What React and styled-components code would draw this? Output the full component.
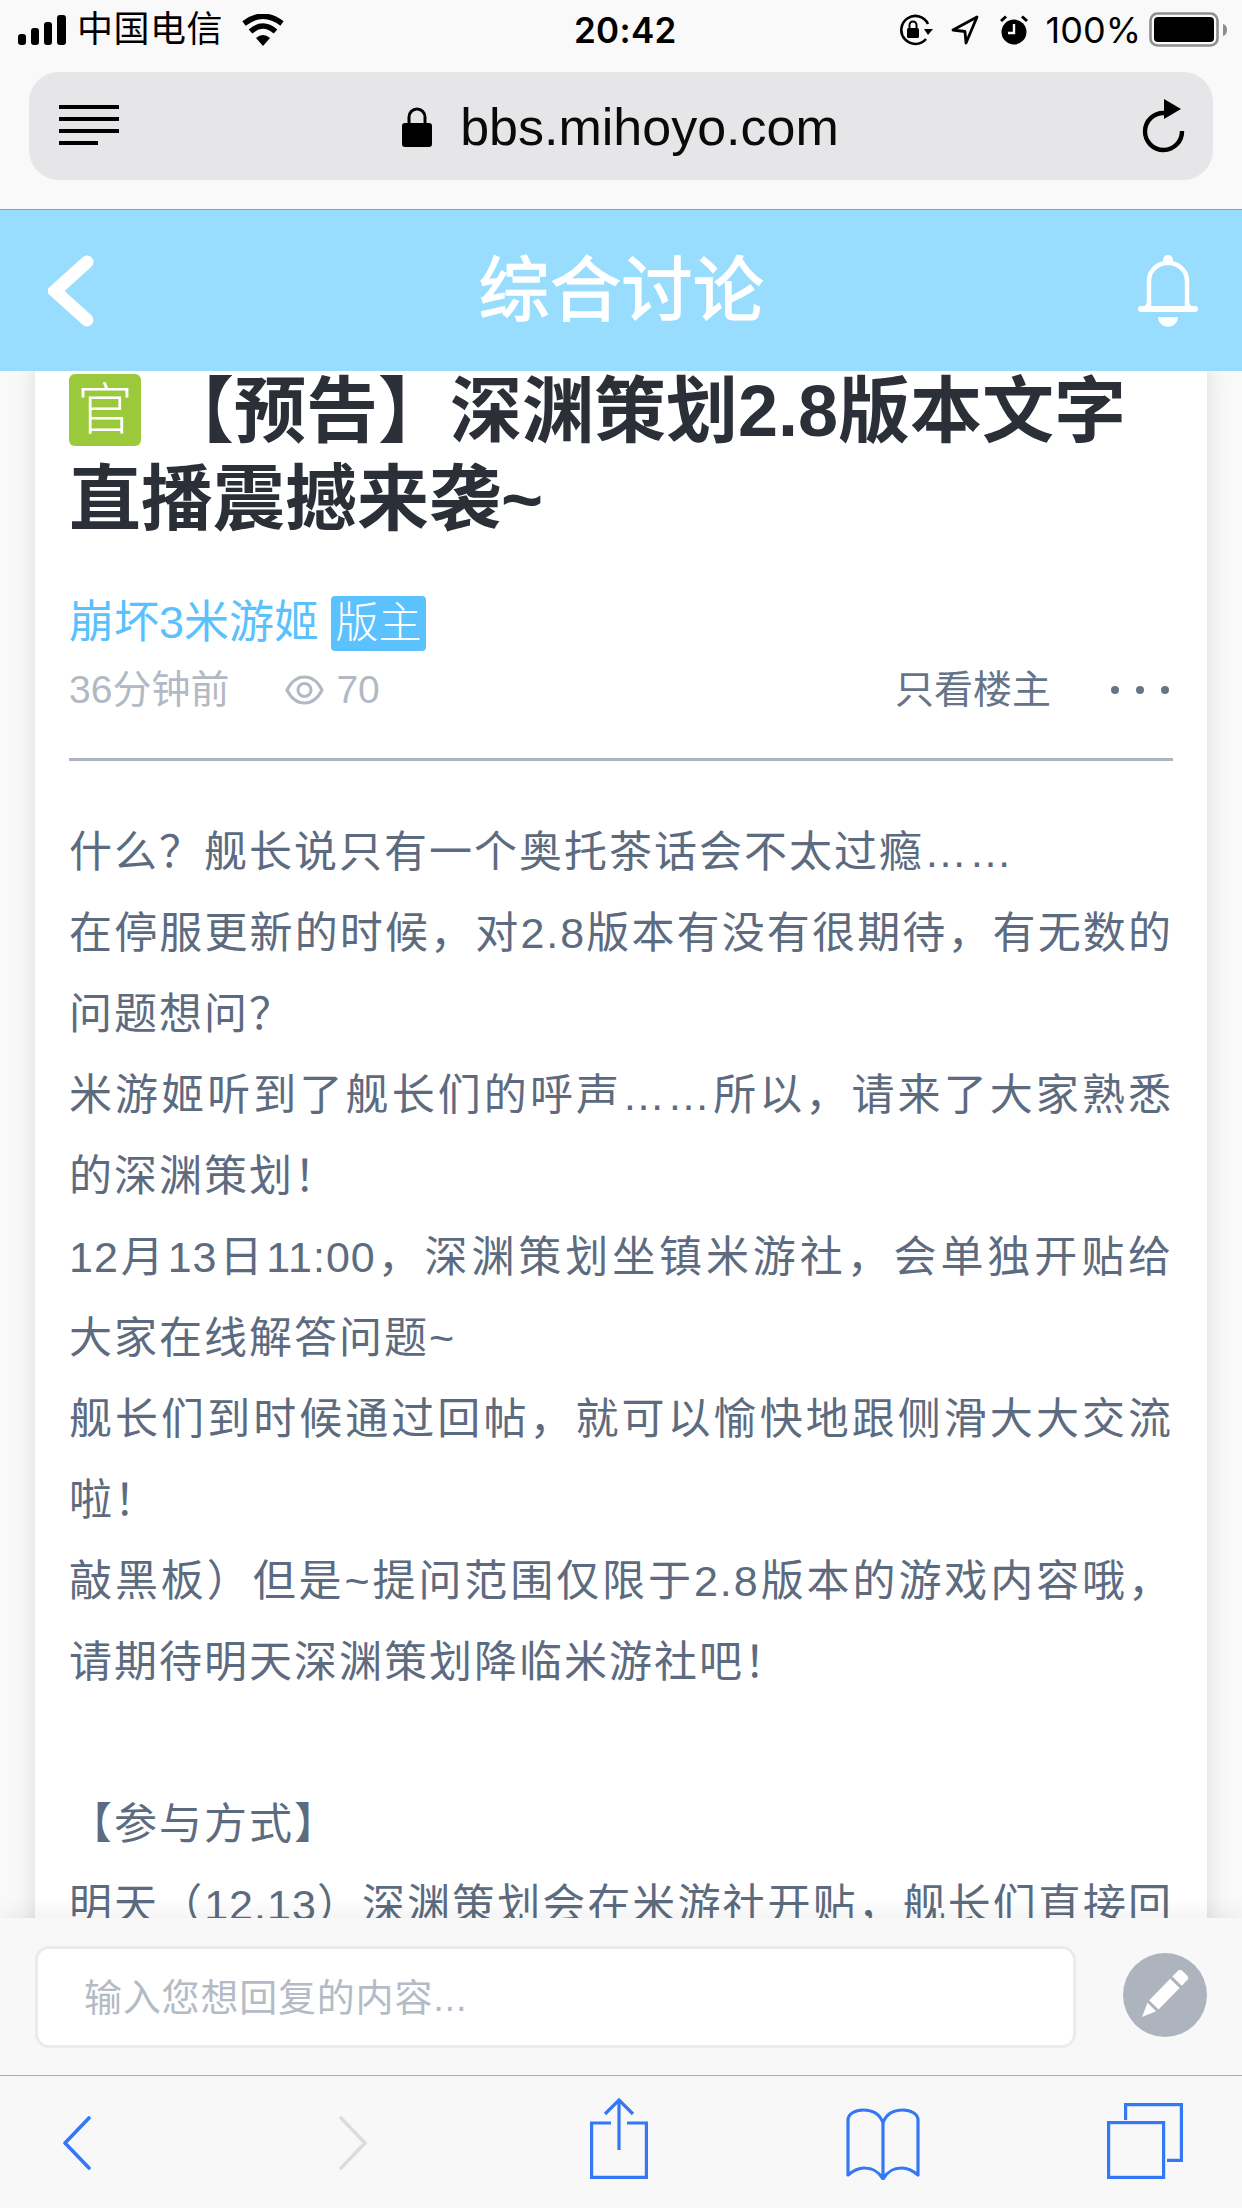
import React from 'react';
import styled, { createGlobalStyle } from 'styled-components';

const Global = createGlobalStyle`
  html, body { margin: 0; padding: 0; background: #f9f9f9; }
  * { box-sizing: border-box; }
  body { font-family: "Liberation Sans", "Noto Sans CJK SC", sans-serif; }
`;

const Phone = styled.div`
  width: 1242px; height: 2208px; display: flex; flex-direction: column; overflow: hidden; background: #f9f9f9;
`;
const StatusBar = styled.div`
  height: 60px; flex: none; display: flex; align-items: center; padding: 0 15px 0 18px; color: #000;
`;
const StatusLeft = styled.div`
  width: 556px; display: flex; align-items: center;
`;
const Carrier = styled.span`
  font-size: 36px; line-height: 40px; margin: 0 19px 0 11px; letter-spacing: 0.5px;
`;
const Time = styled.span`
  font-family: Inter, "Liberation Sans", sans-serif; font-size: 35px; font-weight: 600; letter-spacing: 0.3px; line-height: 40px;
`;
const StatusRight = styled.div`
  margin-left: auto; display: flex; align-items: center;
`;
const Percent = styled.span`
  font-family: Inter, "Liberation Sans", sans-serif; font-size: 36px; line-height: 40px; margin: 0 8px 0 18px;
`;
const AddressWrap = styled.div`
  height: 150px; flex: none; padding: 12px 29px 0; border-bottom: 1px solid #6fa9cd;
`;
const AddressBar = styled.div`
  height: 108px; border-radius: 30px; background: #e6e6e8; display: flex; align-items: center; padding: 0 27px 0 30px;
`;
const Url = styled.div`
  flex: 1; display: flex; align-items: center; justify-content: center; gap: 28px; padding-right: 18px;
  font-size: 52px; color: #0a0a0a; line-height: 60px;
`;
const UrlText = styled.span`
  margin-top: 2px;
`;
const Header = styled.header`
  height: 161px; flex: none; background: #98ddfd; display: flex; align-items: center; padding: 0 44px 0 48px; justify-content: space-between;
`;
const HeaderTitle = styled.h2`
  margin: 0 0 0 11px; font-size: 71px; font-weight: 400; color: #fff; line-height: 90px; text-align: center; -webkit-text-stroke: 1.4px #fff; letter-spacing: 0.5px;
`;
const Main = styled.main`
  flex: 1; min-height: 0; overflow: hidden; padding: 0 35px;
`;
const Card = styled.article`
  background: #fff; box-shadow: 0 0 22px rgba(0,0,0,.13); padding: 0 34px; min-height: 100%;
`;
const Title = styled.h1`
  margin: -4px 0 0; font-size: 72px; line-height: 88px; font-weight: 700; color: #2b3038;
`;
const Official = styled.span`
  display: inline-block; width: 72px; height: 72px; border-radius: 6px; background: #9aca3c; color: #fff;
  font-size: 56px; font-weight: 300; line-height: 72px; text-align: center; vertical-align: top; margin: 7px 21px 0 0;
`;
const AuthorRow = styled.div`
  display: flex; align-items: center; margin-top: 52px; height: 56px;
`;
const Author = styled.span`
  font-size: 45px; color: #5bc1fd; line-height: 56px;
`;
const RoleTag = styled.span`
  margin-left: 12px; width: 95px; height: 55px; border-radius: 4px; background: #5bc2ff; color: #fff; font-size: 43px; font-weight: 300;
  line-height: 55px; text-align: center;
`;
const MetaRow = styled.div`
  display: flex; align-items: center; margin-top: 16px; height: 46px; font-size: 39px; line-height: 46px; color: #b3b9c4;
`;
const Views = styled.span`
  display: flex; align-items: center; gap: 12px; margin-left: 56px;
`;
const OnlyOwner = styled.span`
  margin-left: auto; color: #66748a;
`;
const Dots = styled.span`
  display: flex; gap: 17px; margin: 0 4px 0 60px;
`;
const Dot = styled.i`
  display: block; width: 8px; height: 8px; border-radius: 50%; background: #66748a;
`;
const Rule = styled.div`
  height: 3px; background: #adb5bf; margin-top: 45px;
`;
const Body = styled.div`
  margin-top: 51px; font-size: 43px; letter-spacing: 2px; line-height: 81px; color: #5d6b80;
`;
const Para = styled.p`
  margin: 0; min-height: 81px; text-align: justify;
`;
const Tight = styled.span`
  letter-spacing: ${p => p.$gap}px;
`;
const ReplyBar = styled.div`
  height: 157px; flex: none; background: #f8f8f9; display: flex; align-items: center; padding: 0 35px; gap: 47px;
  box-shadow: 0 -6px 18px rgba(0,0,0,.06); position: relative;
`;
const ReplyInput = styled.div`
  width: 1041px; height: 102px; margin-top: 1px; border: 3px solid #e9ebef; border-radius: 14px; background: #fff; display: flex; align-items: center;
  padding: 0 0 6px 46px; font-size: 38px; letter-spacing: 0.8px; color: #b4bbc6;
`;
const PenButton = styled.button`
  width: 84px; height: 84px; border: 0; padding: 0; border-radius: 50%; background: #adb4bd; display: block; margin-top: -3px;
`;
const Toolbar = styled.nav`
  height: 133px; flex: none; background: #f8f8f8; border-top: 1px solid #b0b0b0; display: grid;
  grid-template-columns: 276px 251px 256px 261px auto; align-items: start; padding: 22px 0 0 63px;
`;
const Svg = styled.svg`
  display: block; flex: none;
`;
const NavIcon = styled(Svg)`
  margin-top: 18px;
`;
const BookIcon = styled(Svg)`
  margin-top: 10px;
`;
const TabsIcon = styled(Svg)`
  margin-top: 5px;
`;
const LocationIcon = styled(Svg)`
  margin-left: 18px;
`;
const AlarmIcon = styled(Svg)`
  margin-left: 21px;
`;

const Signal = () => (
  <Svg width="48" height="30" viewBox="0 0 48 30" fill="#000">
    <rect x="0" y="19" width="8" height="11" rx="3" />
    <rect x="13" y="13" width="8" height="17" rx="3" />
    <rect x="26" y="7" width="8" height="23" rx="3" />
    <rect x="39" y="0" width="9" height="30" rx="3" />
  </Svg>
);
const Wifi = () => (
  <Svg width="42" height="32" viewBox="0 0 42 32">
    <path d="M21 32 L14 24 Q21 18 28 24 Z" fill="#000" />
    <path d="M8.5 17.5 Q21 6.5 33.5 17.5" fill="none" stroke="#000" strokeWidth="5.5" />
    <path d="M2 9.5 Q21 -5 40 9.5" fill="none" stroke="#000" strokeWidth="5.5" />
  </Svg>
);
const RotationLock = () => (
  <Svg width="36" height="32" viewBox="0 0 36 32">
    <path d="M31 10 A14 14 0 1 0 29 25" fill="none" stroke="#000" strokeWidth="2.6" />
    <path d="M27 15 L36 15 L31 21 Z" fill="#000" />
    <rect x="10" y="14" width="12" height="10" rx="1.5" fill="#000" />
    <path d="M12.5 14 V11 A3.5 3.5 0 0 1 19.5 11 V14" fill="none" stroke="#000" strokeWidth="2" />
  </Svg>
);
const Location = () => (
  <LocationIcon width="28" height="30" viewBox="0 0 28 30">
    <path d="M26 2 L2 15 L14 16.5 L15 28 Z" fill="none" stroke="#000" strokeWidth="2.8" strokeLinejoin="round" />
  </LocationIcon>
);
const Alarm = () => (
  <AlarmIcon width="28" height="30" viewBox="0 0 28 30">
    <circle cx="14" cy="17" r="12.5" fill="#000" />
    <path d="M1 6 L6 1.5 M27 6 L22 1.5" stroke="#000" strokeWidth="3" />
    <path d="M14 9 V18 H8" fill="none" stroke="#f9f9f9" strokeWidth="2.4" />
  </AlarmIcon>
);
const Battery = () => (
  <Svg width="78" height="36" viewBox="0 0 78 36">
    <rect x="1.5" y="1.5" width="67" height="32" rx="7" fill="none" stroke="#8e8e8e" strokeWidth="2.6" />
    <rect x="5" y="5" width="60" height="25" rx="4" fill="#000" />
    <path d="M74 12 Q78 13 78 18 Q78 23 74 24 Z" fill="#8e8e8e" />
  </Svg>
);
const Menu = () => (
  <Svg width="60" height="42" viewBox="0 0 60 42" fill="#000">
    <rect y="0" width="60" height="4" /><rect y="12" width="60" height="4" />
    <rect y="24" width="60" height="4" /><rect y="36" width="39" height="4" />
  </Svg>
);
const Lock = () => (
  <Svg width="30" height="42" viewBox="0 0 30 42">
    <path d="M7 20 V12 A8 8 0 0 1 23 12 V20" fill="none" stroke="#000" strokeWidth="3" />
    <rect x="0" y="18" width="30" height="24" rx="3" fill="#000" />
  </Svg>
);
const Reload = () => (
  <Svg width="46" height="54" viewBox="0 0 46 54">
    <path d="M24 14 A18.5 18.5 0 1 0 42 32" fill="none" stroke="#000" strokeWidth="4.4" />
    <path d="M24 0 L41 10 L24 20 Z" fill="#000" />
  </Svg>
);
const BackChevron = () => (
  <Svg width="46" height="72" viewBox="0 0 46 72">
    <path d="M39 7 L7 36 L39 65" fill="none" stroke="#fff" strokeWidth="13" strokeLinecap="round" strokeLinejoin="miter" />
  </Svg>
);
const Bell = () => (
  <Svg width="60" height="72" viewBox="0 0 60 72" fill="none">
    <circle cx="30" cy="5" r="5" fill="#fff" />
    <path d="M11 53 V26 C11 15 20 8 30 8 C40 8 49 15 49 26 V53" stroke="#fff" strokeWidth="4.5" />
    <path d="M11 48 Q10 53 3 55" stroke="#fff" strokeWidth="4.5" />
    <path d="M49 48 Q50 53 57 55" stroke="#fff" strokeWidth="4.5" />
    <rect x="0" y="51" width="60" height="6" rx="3" fill="#fff" />
    <path d="M20 62 H40 A10 10 0 0 1 20 62 Z" fill="#fff" />
  </Svg>
);
const Eye = () => (
  <Svg width="39" height="30" viewBox="0 0 39 30" fill="none" stroke="#b3b9c4" strokeWidth="3">
    <path d="M2 15 C7 5 13 2 19.5 2 C26 2 32 5 37 15 C32 25 26 28 19.5 28 C13 28 7 25 2 15 Z" />
    <circle cx="19.5" cy="15" r="6.5" />
  </Svg>
);
const Pencil = () => (
  <Svg width="84" height="84" viewBox="0 0 84 84" fill="#fff">
    <path d="M19 64 L24.5 49.8 L33.1 58.2 Z" />
    <path d="M26.2 47.2 L47.2 25.7 L56.6 34.9 L35.5 56.4 Z" />
    <path d="M49.3 23.6 L55.3 17.4 Q57 16 59 17.6 L64.5 23 Q66 25 64.7 26.5 L58.7 32.7 Z" />
  </Svg>
);
const NavBack = ({ color }) => (
  <NavIcon width="28" height="54" viewBox="0 0 28 54">
    <path d="M26 2 L2 27 L26 52" fill="none" stroke={color} strokeWidth="3.6" strokeLinecap="round" strokeLinejoin="round" />
  </NavIcon>
);
const NavForward = ({ color }) => (
  <NavIcon width="28" height="54" viewBox="0 0 28 54">
    <path d="M2 2 L26 27 L2 52" fill="none" stroke={color} strokeWidth="3.6" strokeLinecap="round" strokeLinejoin="round" />
  </NavIcon>
);
const Share = () => (
  <Svg width="58" height="82" viewBox="0 0 58 82" fill="none" stroke="#3478f6" strokeWidth="3.2">
    <path d="M21 25 H1.6 V79.4 H56.4 V25 H37" />
    <path d="M29 2 V52" />
    <path d="M15 16 L29 2 L43 16" />
  </Svg>
);
const Book = () => (
  <BookIcon width="74" height="72" viewBox="0 0 74 72" fill="none" stroke="#3478f6" strokeWidth="3.2" strokeLinejoin="round">
    <path d="M37 15 C34 6 26 2 17 2 C9 2 2 6 2 12 V67 C8 62 13 60 18 60 C28 60 33 64 37 71 C41 64 46 60 56 60 C61 60 66 62 72 67 V12 C72 6 65 2 57 2 C48 2 40 6 37 15 V71" />
  </BookIcon>
);
const Tabs = () => (
  <TabsIcon width="76" height="76" viewBox="0 0 76 76" fill="none" stroke="#3478f6" strokeWidth="3.2">
    <path d="M18.6 17 V1.6 H74.4 V57.4 H60" />
    <rect x="1.6" y="19.6" width="55" height="54.8" />
  </TabsIcon>
);

const paragraphs = [
  '什么？舰长说只有一个奥托茶话会不太过瘾……',
  '在停服更新的时候，对2.8版本有没有很期待，有无数的问题想问？',
  '米游姬听到了舰长们的呼声……所以，请来了大家熟悉的深渊策划！',
  <><Tight $gap={1}>12</Tight>月<Tight $gap={1}>13</Tight>日<Tight $gap={1}>11:00</Tight>，深渊策划坐镇米游社，会单独开贴给大家在线解答问题~</>,
  '舰长们到时候通过回帖，就可以愉快地跟侧滑大大交流啦！',
  '敲黑板）但是~提问范围仅限于2.8版本的游戏内容哦，请期待明天深渊策划降临米游社吧！',
  '',
  '【参与方式】',
  <>明天（<Tight $gap={1}>12.13</Tight>）深渊策划会在米游社开贴，舰长们直接回复帖子提问即可。</>,
];

export default function App() {
  return (
    <Phone>
      <Global />
      <StatusBar>
        <StatusLeft>
          <Signal />
          <Carrier>中国电信</Carrier>
          <Wifi />
        </StatusLeft>
        <Time>20:42</Time>
        <StatusRight>
          <RotationLock />
          <Location />
          <Alarm />
          <Percent>100%</Percent>
          <Battery />
        </StatusRight>
      </StatusBar>
      <AddressWrap>
        <AddressBar>
          <Menu />
          <Url><Lock /><UrlText>bbs.mihoyo.com</UrlText></Url>
          <Reload />
        </AddressBar>
      </AddressWrap>
      <Header>
        <BackChevron />
        <HeaderTitle>综合讨论</HeaderTitle>
        <Bell />
      </Header>
      <Main>
        <Card>
          <Title>
            <Official>官</Official>【预告】深渊策划2.8版本文字直播震撼来袭~
          </Title>
          <AuthorRow>
            <Author>崩坏3米游姬</Author>
            <RoleTag>版主</RoleTag>
          </AuthorRow>
          <MetaRow>
            <span>36分钟前</span>
            <Views><Eye />70</Views>
            <OnlyOwner>只看楼主</OnlyOwner>
            <Dots><Dot /><Dot /><Dot /></Dots>
          </MetaRow>
          <Rule />
          <Body>
            {paragraphs.map((p, i) => <Para key={i}>{p}</Para>)}
          </Body>
        </Card>
      </Main>
      <ReplyBar>
        <ReplyInput>输入您想回复的内容...</ReplyInput>
        <PenButton aria-label="发送"><Pencil /></PenButton>
      </ReplyBar>
      <Toolbar>
        <NavBack color="#3478f6" />
        <NavForward color="#dcdcdc" />
        <Share />
        <Book />
        <Tabs />
      </Toolbar>
    </Phone>
  );
}
